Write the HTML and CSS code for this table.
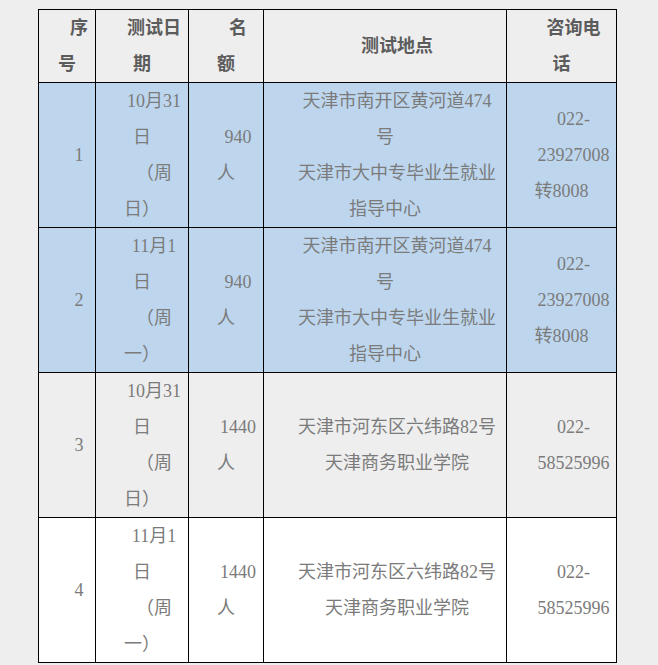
FILE: index.html
```html
<!DOCTYPE html>
<html lang="zh-CN">
<head>
<meta charset="utf-8">
<title>测试安排</title>
<link rel="stylesheet" href="styles.css">
</head>
<body>
<div class="wrap">
<table class="grid">
  <colgroup>
    <col class="c1"><col class="c2"><col class="c3"><col class="c4"><col class="c5">
  </colgroup>
  <thead>
    <tr class="head">
      <th><div class="l s">序</div><div class="l">号</div></th>
      <th><div class="l s">测试日</div><div class="l">期</div></th>
      <th><div class="l s">名</div><div class="l">额</div></th>
      <th><div class="l s">测试地点</div></th>
      <th><div class="l s">咨询电</div><div class="l">话</div></th>
    </tr>
  </thead>
  <tbody>
    <tr class="blue">
      <td><div class="l s">1</div></td>
      <td><div class="l s">10月31</div><div class="l">日</div><div class="l s">（周</div><div class="l">日）</div></td>
      <td><div class="l s">940</div><div class="l">人</div></td>
      <td><div class="l s">天津市南开区黄河道474</div><div class="l">号</div><div class="l s">天津市大中专毕业生就业</div><div class="l">指导中心</div></td>
      <td><div class="l s">022-</div><div class="l s">23927008</div><div class="l">转8008</div></td>
    </tr>
    <tr class="blue">
      <td><div class="l s">2</div></td>
      <td><div class="l s">11月1</div><div class="l">日</div><div class="l s">（周</div><div class="l">一）</div></td>
      <td><div class="l s">940</div><div class="l">人</div></td>
      <td><div class="l s">天津市南开区黄河道474</div><div class="l">号</div><div class="l s">天津市大中专毕业生就业</div><div class="l">指导中心</div></td>
      <td><div class="l s">022-</div><div class="l s">23927008</div><div class="l">转8008</div></td>
    </tr>
    <tr class="gray">
      <td><div class="l s">3</div></td>
      <td><div class="l s">10月31</div><div class="l">日</div><div class="l s">（周</div><div class="l">日）</div></td>
      <td><div class="l s">1440</div><div class="l">人</div></td>
      <td><div class="l s">天津市河东区六纬路82号</div><div class="l s">天津商务职业学院</div></td>
      <td><div class="l s">022-</div><div class="l s">58525996</div></td>
    </tr>
    <tr class="white">
      <td><div class="l s">4</div></td>
      <td><div class="l s">11月1</div><div class="l">日</div><div class="l s">（周</div><div class="l">一）</div></td>
      <td><div class="l s">1440</div><div class="l">人</div></td>
      <td><div class="l s">天津市河东区六纬路82号</div><div class="l s">天津商务职业学院</div></td>
      <td><div class="l s">022-</div><div class="l s">58525996</div></td>
    </tr>
  </tbody>
</table>
</div>
</body>
</html>
```
FILE: styles.css
```css
html, body {
  margin: 0;
  padding: 0;
  background: #eeeeee;
}
.wrap {
  padding: 9px 0 0 38px;
}
.grid {
  border-collapse: collapse;
  table-layout: fixed;
  width: 579px;
  font-family: "Liberation Serif", "Noto Sans CJK SC", serif;
  font-size: 18px;
  color: #7b7b7b;
}
.c1 { width: 57px; }
.c2 { width: 93px; }
.c3 { width: 75px; }
.c4 { width: 243px; }
.c5 { width: 110px; }
.grid th,
.grid td {
  border: 1px solid #000;
  padding: 0;
  vertical-align: middle;
  text-align: center;
}
.grid th {
  font-weight: bold;
  color: #5c5c5c;
}
.l {
  line-height: 36px;
  height: 36px;
  white-space: nowrap;
}
.s {
  padding-left: 24px;
}
.head { background: #eeeeee; }
.blue { background: #bdd6ee; }
.gray { background: #eeeeee; }
.white { background: #ffffff; }
```
